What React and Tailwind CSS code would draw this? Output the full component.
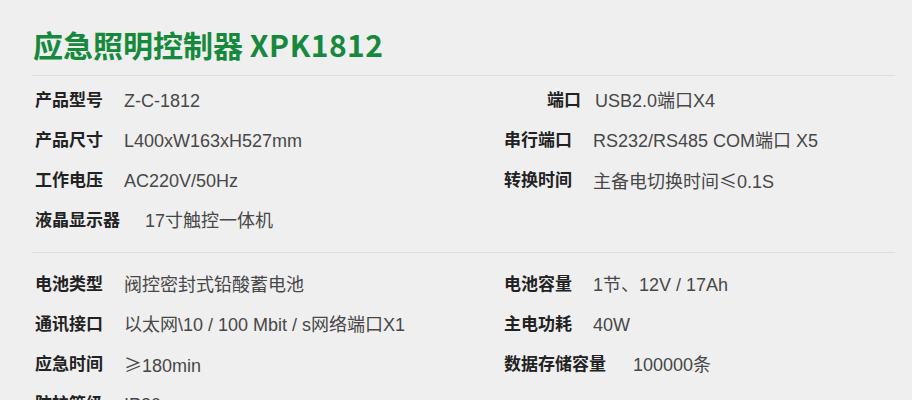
import React from "react";

const cjk = { fontFamily: '"Noto Sans CJK SC", sans-serif' };

const leftTop = [
  { label: "产品型号", value: "Z-C-1812" },
  { label: "产品尺寸", value: "L400xW163xH527mm" },
  { label: "工作电压", value: "AC220V/50Hz" },
  { label: "液晶显示器", value: "17寸触控一体机", gap: "ml-[25px]" },
];

const rightTop = [
  { label: "端口", value: "USB2.0端口X4", indent: "pl-[43px]", gap: "ml-[14px]" },
  { label: "串行端口", value: "RS232/RS485 COM端口 X5" },
  {
    label: "转换时间",
    value: (
      <>
        主备电切换时间<span style={cjk}>≤</span>0.1S
      </>
    ),
  },
  null,
];

const leftBottom = [
  { label: "电池类型", value: "阀控密封式铅酸蓄电池" },
  { label: "通讯接口", value: "以太网\\10 / 100 Mbit / s网络端口X1" },
  {
    label: "应急时间",
    value: (
      <>
        <span style={cjk}>≥</span>180min
      </>
    ),
  },
  { label: "防护等级", value: "IP30" },
];

const rightBottom = [
  { label: "电池容量", value: "1节、12V / 17Ah" },
  { label: "主电功耗", value: "40W" },
  { label: "数据存储容量", value: "100000条", gap: "ml-[27px]" },
  null,
];

function Row({ item }) {
  if (!item) return <div className="h-10" />;
  return (
    <div className={`h-10 flex items-center whitespace-nowrap ${item.indent || ""}`}>
      <span className="text-[17px] font-bold text-[#222]">{item.label}</span>
      <span className={`text-[18px] text-[#474747] ${item.gap || "ml-[21px]"}`}>{item.value}</span>
    </div>
  );
}

function Section({ left, right, className }) {
  return (
    <div className={`grid grid-cols-[469px_1fr] pl-[35px] ${className}`}>
      <div className="flex flex-col">
        {left.map((it, i) => (
          <Row key={i} item={it} />
        ))}
      </div>
      <div className="flex flex-col">
        {right.map((it, i) => (
          <Row key={i} item={it} />
        ))}
      </div>
    </div>
  );
}

export default function App() {
  return (
    <div
      className="w-[912px] h-[400px] overflow-hidden bg-[#efefef]"
      style={{ fontFamily: '"Liberation Sans", "Noto Sans CJK SC", sans-serif' }}
    >
      <div className="pl-[33px] pt-[27px] h-[75px]">
        <h1 className="text-[30px] leading-[34px] font-bold text-[#16893c]" style={cjk}>
          应急照明控制器 <span className="tracking-[0.5px]">XPK1812</span>
        </h1>
      </div>
      <div className="ml-[32px] mr-[17px] h-px bg-[#dedede]" />
      <Section left={leftTop} right={rightTop} className="pt-[5px]" />
      <div className="ml-[32px] mr-[17px] mt-[11px] h-px bg-[#dedede]" />
      <Section left={leftBottom} right={rightBottom} className="pt-[12px]" />
    </div>
  );
}
